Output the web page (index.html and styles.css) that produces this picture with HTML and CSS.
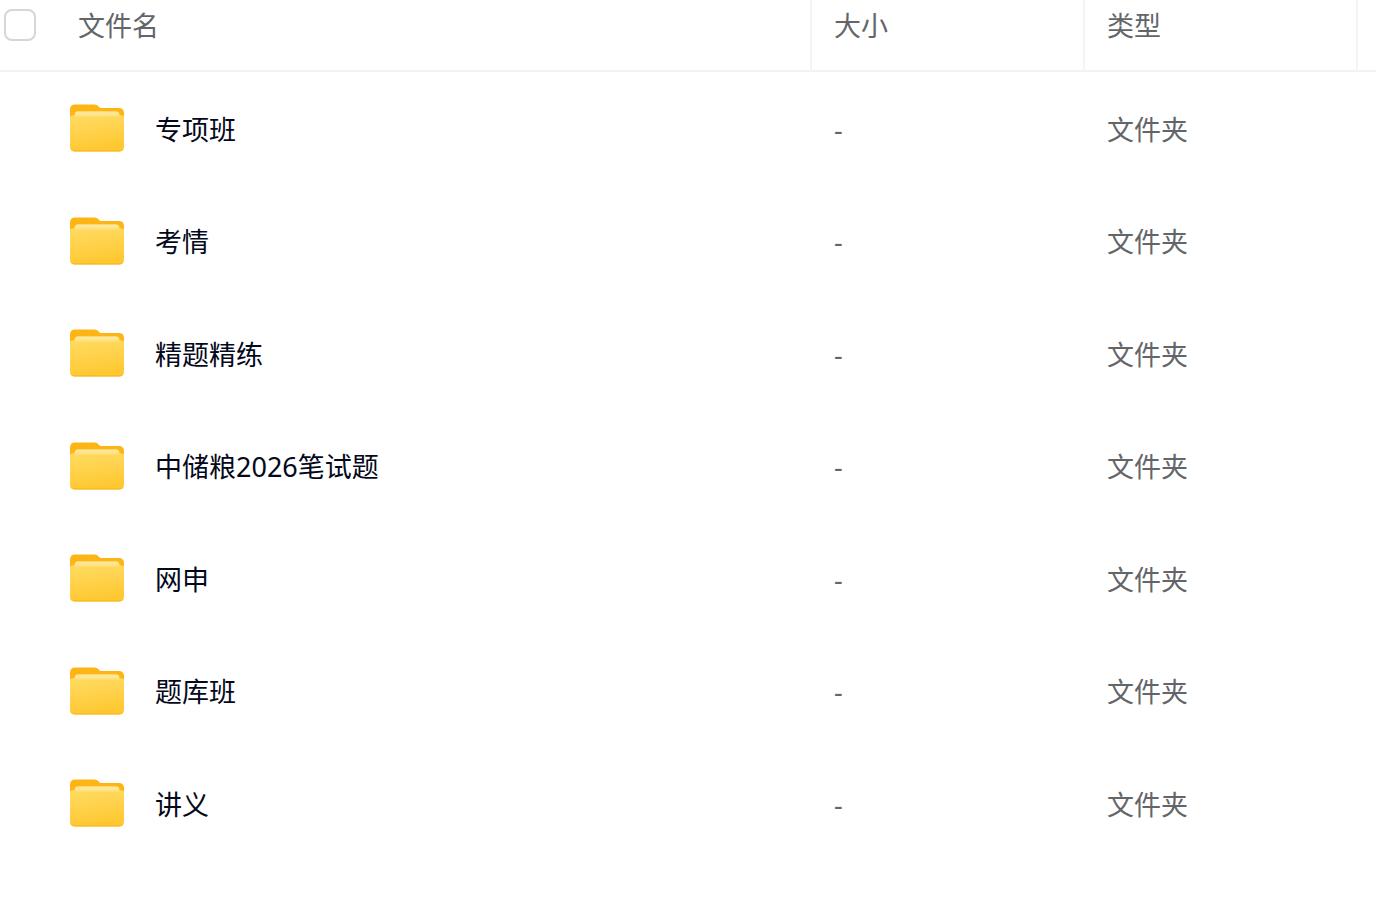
FILE: index.html
```html
<!doctype html>
<html lang="zh-CN">
<head>
	<meta charset="UTF-8">
	<title>文件列表</title>

	<link rel="stylesheet" href="styles.css">

</head>


<body>

	<!-- folder icon, reused by every row -->
	<svg class="iconDefs" width="0" height="0" aria-hidden="true">
		<defs>
			<linearGradient id="folderFront" x1="0" y1="0" x2="0.2" y2="1">
				<stop offset="0" stop-color="#ffdc66"/>
				<stop offset="0.5" stop-color="#ffd34e"/>
				<stop offset="1" stop-color="#ffc832"/>
			</linearGradient>
			<linearGradient id="folderShine" x1="0" y1="0" x2="0" y2="1">
				<stop offset="0" stop-color="#ffe79a"/>
				<stop offset="0.4" stop-color="#ffe79a"/>
				<stop offset="1" stop-color="#ffdc66"/>
			</linearGradient>
		</defs>
		<symbol id="folder" viewBox="0 0 54 48">
			<path fill="#fdb515" d="M5 0.5H24.5C26.2 0.5 27.4 1.2 28.4 2.3L29.4 3.3C30 3.9 30.6 4.1 31.5 4.1H49C52 4.1 54 6 54 9V20H0V5.5C0 2.4 2 0.5 5 0.5Z"/>
			<path fill="url(#folderFront)" d="M0 13.5C0 12 0.8 11.4 2.2 11.4C4.2 11.4 4.8 10.6 5 9.6C5.3 8.2 6.2 7.5 7.8 7.5H46.2C47.8 7.5 48.7 8.2 49 9.6C49.2 10.6 49.8 11.4 51.8 11.4C53.2 11.4 54 12 54 13.5V42.5C54 45.6 52.2 47.5 49 47.5H5C1.8 47.5 0 45.6 0 42.5Z"/>
			<path fill="url(#folderShine)" d="M7.8 7.5H46.2C47.8 7.5 48.7 8.2 49 9.6L49.3 13H4.7L5 9.6C5.3 8.2 6.2 7.5 7.8 7.5Z"/>
			<path fill="#fbbd24" d="M0.3 44.2C0.9 46.4 2.6 47.5 5 47.5H49C51.4 47.5 53.1 46.4 53.7 44.2C52.8 45.5 51.3 46 49 46H5C2.7 46 1.2 45.5 0.3 44.2Z"/>
		</symbol>
	</svg>

	<table class="fileTable">
		<colgroup>
			<col class="colCheck">
			<col>
			<col class="colInfo">
			<col class="colInfo">
			<col class="colEnd">
		</colgroup>
		<thead>
			<tr>
				<th class="check"><input type="checkbox" aria-label="全选"></th>
				<th class="name">文件名</th>
				<th class="split">大小</th>
				<th class="split">类型</th>
				<td class="split"></td>
			</tr>
		</thead>
		<tbody>
			<tr>
				<td></td>
				<td class="name"><a href="#"><svg class="folder" aria-hidden="true"><use href="#folder"/></svg>专项班</a></td>
				<td>-</td>
				<td>文件夹</td>
				<td></td>
			</tr>
			<tr>
				<td></td>
				<td class="name"><a href="#"><svg class="folder" aria-hidden="true"><use href="#folder"/></svg>考情</a></td>
				<td>-</td>
				<td>文件夹</td>
				<td></td>
			</tr>
			<tr>
				<td></td>
				<td class="name"><a href="#"><svg class="folder" aria-hidden="true"><use href="#folder"/></svg>精题精练</a></td>
				<td>-</td>
				<td>文件夹</td>
				<td></td>
			</tr>
			<tr>
				<td></td>
				<td class="name"><a href="#"><svg class="folder" aria-hidden="true"><use href="#folder"/></svg>中储粮2026笔试题</a></td>
				<td>-</td>
				<td>文件夹</td>
				<td></td>
			</tr>
			<tr>
				<td></td>
				<td class="name"><a href="#"><svg class="folder" aria-hidden="true"><use href="#folder"/></svg>网申</a></td>
				<td>-</td>
				<td>文件夹</td>
				<td></td>
			</tr>
			<tr>
				<td></td>
				<td class="name"><a href="#"><svg class="folder" aria-hidden="true"><use href="#folder"/></svg>题库班</a></td>
				<td>-</td>
				<td>文件夹</td>
				<td></td>
			</tr>
			<tr>
				<td></td>
				<td class="name"><a href="#"><svg class="folder" aria-hidden="true"><use href="#folder"/></svg>讲义</a></td>
				<td>-</td>
				<td>文件夹</td>
				<td></td>
			</tr>
		</tbody>
	</table>

</body>
</html>
```

FILE: styles.css
```css
body {
	margin: 0;
	background-color: #ffffff;
	color: #636569;
	font-family: "Noto Sans", "Noto Sans CJK SC", sans-serif;
	font-size: 27px;
	line-height: 40px;
}

.iconDefs {
	display: block;
}

.fileTable {
	width: 100%;
	table-layout: fixed;
	border-collapse: separate;
	border-spacing: 0;
}

.colCheck {
	width: 44px;
}
.colInfo {
	width: 273px;
}
.colEnd {
	width: 20px;
}

.fileTable th, .fileTable td {
	box-sizing: border-box;
	padding: 0 0 0 24px;
	text-align: left;
	font-weight: normal;
}

/* header: thin separators between the columns */
.fileTable thead th, .fileTable thead td {
	height: 72px;
	padding-top: 6px;
	vertical-align: top;
	border-bottom: 2px solid #f2f2f2;
}
.fileTable thead .split {
	padding-left: 22px;
	border-left: 2px solid #f4f4f4;
}
.fileTable thead .split:last-child {
	padding-left: 0;
}
.fileTable thead .name {
	padding-left: 34px;
}
.fileTable thead .check {
	padding: 9px 0 0 4px;
}

.check input {
	appearance: none;
	display: block;
	box-sizing: border-box;
	width: 32px;
	height: 32px;
	margin: 0;
	border: 2px solid #d6d6d6;
	border-radius: 8px;
	background-color: #ffffff;
}
.check input:checked {
	background-color: #fdb515;
}

/* rows */
.fileTable tbody td {
	height: 112px;
	padding-top: 3px;
}
.fileTable tbody tr:nth-child(even) td {
	height: 113px;
}
.fileTable tbody td:last-child {
	padding-left: 0;
}
.fileTable tbody .name {
	padding-top: 0;
	padding-left: 26px;
}

.name a {
	display: flex;
	align-items: center;
	gap: 31px;
	color: #03081a;
	text-decoration: none;
}
.name a {
	padding-top: 3px;
}
.folder {
	flex: none;
	width: 54px;
	height: 48px;
	margin-bottom: 3px;
}
```
